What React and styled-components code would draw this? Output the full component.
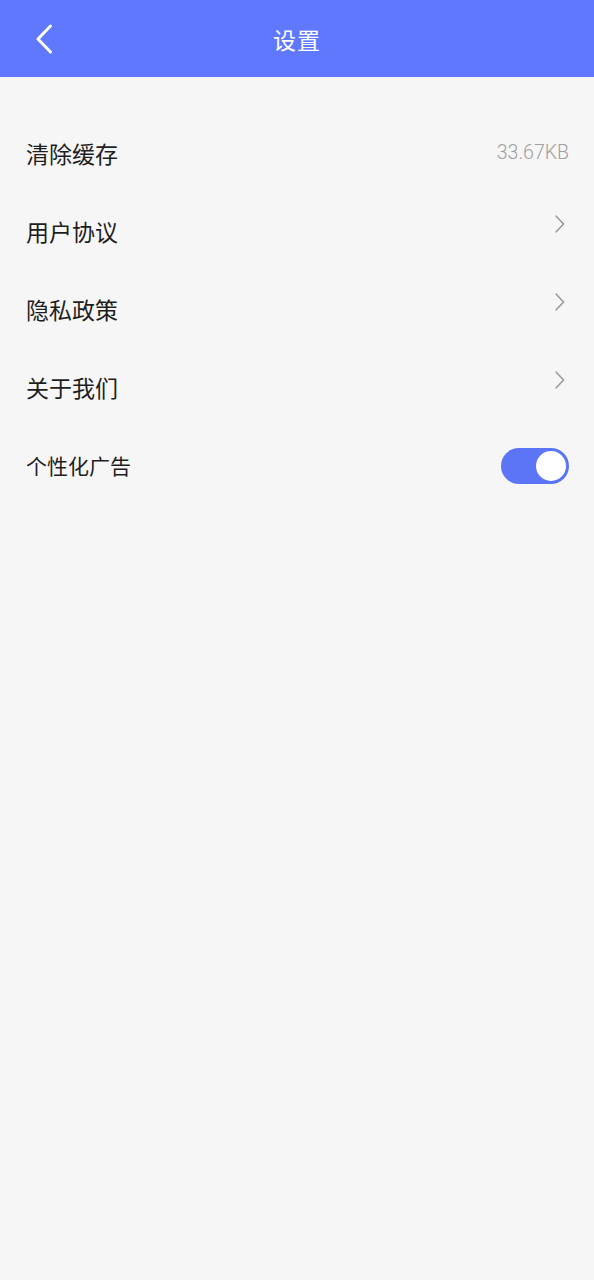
import React, { useState } from 'react'
import styled, { createGlobalStyle } from 'styled-components'

// 设置页面: 顶部导航 + 设置项列表

const GlobalStyle = createGlobalStyle`
    html, body {
        margin: 0;
        padding: 0;
        background: #f6f6f6;
        font-family: "Noto Sans CJK SC", "Noto Sans", sans-serif;
    }
`

const Page = styled.div`
    min-height: 1280px;
    background: #f6f6f6;
`

const Header = styled.header`
    position: relative;
    display: flex;
    align-items: center;
    justify-content: center;
    height: 77px;
    background: #6078fe;
    color: #fff;
`

const BackButton = styled.button`
    position: absolute;
    left: 30px;
    top: 20px;
    width: 28px;
    height: 38px;
    padding: 0;
    display: flex;
    align-items: center;
    justify-content: center;
    background: transparent;
    border: none;
    cursor: pointer;
`

const Title = styled.h1`
    margin: 0;
    font-size: 23px;
    font-weight: 400;
    letter-spacing: 1px;
`

const List = styled.ul`
    list-style: none;
    margin: 0;
    padding: 37px 0 0;
`

const Row = styled.li`
    display: flex;
    justify-content: space-between;
    align-items: center;
    height: 78px;
    padding: 0 25px 0 26px;
    cursor: pointer;
`

const Label = styled.span`
    font-size: ${props => props.$small ? '21px' : '23px'};
    color: #1e1e1e;
`

const Value = styled.span`
    margin-bottom: 2px;
    font-family: Roboto, "Liberation Sans", sans-serif;
    font-size: 19.5px;
    font-weight: 300;
    color: #a0a0a0;
`

const Arrow = styled.svg`
    margin: 0 4px 14px 0;
`

const Switch = styled.button`
    position: relative;
    width: 68px;
    height: 36px;
    margin-top: 2px;
    padding: 0;
    border: none;
    border-radius: 18px;
    background: ${props => props.$on ? '#5c74f6' : '#d8d8d8'};
    cursor: pointer;
    &::after {
        content: "";
        position: absolute;
        top: 3px;
        left: ${props => props.$on ? '35px' : '3px'};
        width: 30px;
        height: 30px;
        border-radius: 50%;
        background: #fff;
    }
`

const Chevron = () => (
    <Arrow width="10" height="18" viewBox="0 0 10 18">
        <path d="M1.2 1.2 L8.6 9 L1.2 16.8" fill="none" stroke="#9a9a9a" strokeWidth="1.6" strokeLinecap="round" strokeLinejoin="round" />
    </Arrow>
)

const items = ['用户协议', '隐私政策', '关于我们']

const App = () => {
    const [adOn, setAdOn] = useState(true)

    return (
        <Page>
            <GlobalStyle />
            <Header>
                <BackButton>
                    <svg width="18" height="30" viewBox="0 0 18 30">
                        <path d="M15.5 2 L3 15 L15.5 28" fill="none" stroke="#fff" strokeWidth="3" strokeLinecap="round" strokeLinejoin="round" />
                    </svg>
                </BackButton>
                <Title>设置</Title>
            </Header>
            <List>
                <Row>
                    <Label>清除缓存</Label>
                    <Value>33.67KB</Value>
                </Row>
                {items.map(item => (
                    <Row key={item}>
                        <Label>{item}</Label>
                        <Chevron />
                    </Row>
                ))}
                <Row>
                    <Label $small>个性化广告</Label>
                    <Switch $on={adOn} onClick={() => setAdOn(!adOn)} />
                </Row>
            </List>
        </Page>
    )
}

export default App
